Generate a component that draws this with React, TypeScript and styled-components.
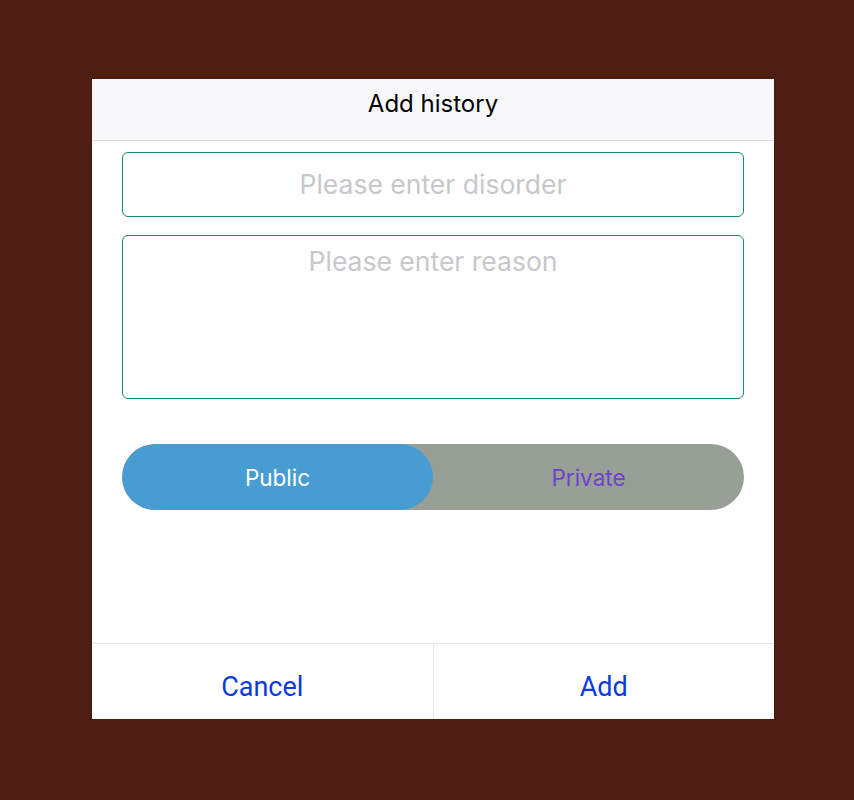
import React from "react";
import styled, { createGlobalStyle } from "styled-components";

const GlobalStyle = createGlobalStyle`
	html, body {
		margin: 0;
		padding: 0;
		background: #4e1d11;
		font-family: Inter, "Noto Sans", sans-serif;
	}
`;

const Screen = styled.div`
	width: 854px;
	height: 800px;
	box-sizing: border-box;
	padding: 79px 0 0 92px;
	display: flex;
	align-items: flex-start;
`;

const Dialog = styled.div`
	width: 682px;
	height: 640px;
	background: #ffffff;
	display: flex;
	flex-direction: column;
	box-shadow: 0 0 1px rgba(0, 0, 0, 0.5);
`;

const Header = styled.div`
	height: 62px;
	flex-shrink: 0;
	background: #f8f8fa;
	border-bottom: 1px solid #dcdcdf;
	display: flex;
	align-items: center;
	justify-content: center;
	font-size: 24px;
	color: #000;
	padding-bottom: 12px;
	box-sizing: border-box;
`;

const Body = styled.div`
	flex: 1;
	padding: 11px 30px 0 30px;
	display: flex;
	flex-direction: column;
`;

const Field = styled.input`
	height: 65px;
	box-sizing: border-box;
	border: 1px solid #12877a;
	border-radius: 6px;
	font-family: inherit;
	font-size: 26.5px;
	text-align: center;
	outline: none;
	padding: 0 0 2px;
	color: #333;
	&::placeholder {
		color: #c7c7cc;
	}
`;

const Area = styled.textarea`
	margin-top: 18px;
	height: 164px;
	box-sizing: border-box;
	border: 1px solid #12877a;
	border-radius: 6px;
	font-family: inherit;
	font-size: 26.5px;
	text-align: center;
	outline: none;
	resize: none;
	padding: 9px 10px;
	color: #333;
	&::placeholder {
		color: #c7c7cc;
	}
`;

const Segment = styled.div`
	margin-top: 45px;
	height: 66px;
	border-radius: 33px;
	background: #989f97;
	display: flex;
	overflow: hidden;
`;

const Option = styled.div<{ $active?: boolean }>`
	flex: 1;
	display: flex;
	align-items: center;
	justify-content: center;
	font-size: 22.5px;
	border-radius: 33px;
	background: ${(p) => (p.$active ? "#479cd2" : "transparent")};
	color: ${(p) => (p.$active ? "#ffffff" : "#6e42cf")};
`;

const Footer = styled.div`
	height: 75px;
	flex-shrink: 0;
	border-top: 1px solid #e6e6e6;
	display: flex;
`;

const Action = styled.button`
	flex: 1;
	border: none;
	background: #fff;
	font-family: Roboto, "Noto Sans", sans-serif;
	font-size: 27px;
	color: #0b3ae0;
	padding: 11px 0 0;
	& + & {
		border-left: 1px solid #e6e6e6;
	}
`;

export default function App() {
	return (
		<>
			<GlobalStyle />
			<Screen>
				<Dialog>
					<Header>Add history</Header>
					<Body>
						<Field placeholder="Please enter disorder" />
						<Area placeholder="Please enter reason" />
						<Segment>
							<Option $active>Public</Option>
							<Option>Private</Option>
						</Segment>
					</Body>
					<Footer>
						<Action>Cancel</Action>
						<Action>Add</Action>
					</Footer>
				</Dialog>
			</Screen>
		</>
	);
}
